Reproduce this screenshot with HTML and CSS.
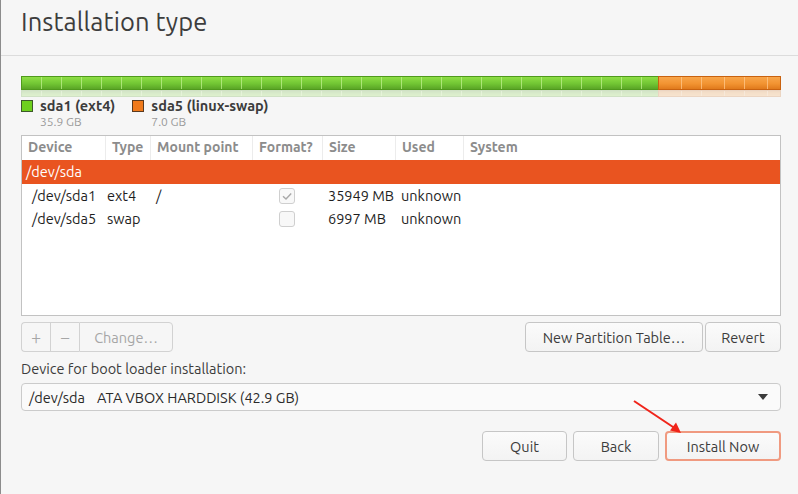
FILE: index.html
```html
<!DOCTYPE html>
<html lang="en">
<head>
<meta charset="utf-8">
<title>Installation type</title>
<link rel="stylesheet" href="styles.css">
</head>
<body>
<div class="window">
  <header class="header">
    <h1 class="title">Installation type</h1>
  </header>
  <main class="content">
    <div class="bar-wrap">
      <div class="bar">
        <div class="seg seg-green" style="width:83.8%"></div>
        <div class="seg seg-orange" style="width:16.2%"></div>
      </div>
      <div class="bar reflect">
        <div class="seg seg-green" style="width:83.8%"></div>
        <div class="seg seg-orange" style="width:16.2%"></div>
      </div>
    </div>

    <div class="legend">
      <div class="legend-item">
        <span class="swatch swatch-green"></span>
        <div class="legend-text">
          <div class="legend-name">sda1 (ext4)</div>
          <div class="legend-size">35.9 GB</div>
        </div>
      </div>
      <div class="legend-item">
        <span class="swatch swatch-orange"></span>
        <div class="legend-text">
          <div class="legend-name">sda5 (linux-swap)</div>
          <div class="legend-size">7.0 GB</div>
        </div>
      </div>
    </div>

    <div class="table">
      <div class="row head">
        <div class="cell">Device</div>
        <div class="cell sep">Type</div>
        <div class="cell sep">Mount point</div>
        <div class="cell sep">Format?</div>
        <div class="cell sep">Size</div>
        <div class="cell sep">Used</div>
        <div class="cell sep">System</div>
      </div>
      <div class="row selected">
        <div class="cell disk">/dev/sda</div>
      </div>
      <div class="row part">
        <div class="cell dev">/dev/sda1</div>
        <div class="cell type">ext4</div>
        <div class="cell">/</div>
        <div class="cell fmt"><span class="check checked"><svg viewBox="0 0 16 16" width="16" height="16"><path d="M4 8.2 L7 11 L12.2 5.4" fill="none" stroke="#a8a8a8" stroke-width="1.4"/></svg></span></div>
        <div class="cell">35949 MB</div>
        <div class="cell">unknown</div>
        <div class="cell"></div>
      </div>
      <div class="row part">
        <div class="cell dev">/dev/sda5</div>
        <div class="cell type">swap</div>
        <div class="cell"></div>
        <div class="cell fmt"><span class="check"></span></div>
        <div class="cell">6997 MB</div>
        <div class="cell">unknown</div>
        <div class="cell"></div>
      </div>
    </div>

    <div class="toolbar">
      <div class="btn-group">
        <button class="btn disabled icon-btn">+</button>
        <button class="btn disabled icon-btn">−</button>
        <button class="btn disabled change-btn">Change…</button>
      </div>
      <div class="right-group">
        <button class="btn npt-btn">New Partition Table…</button>
        <button class="btn revert-btn">Revert</button>
      </div>
    </div>

    <div class="boot-label">Device for boot loader installation:</div>
    <div class="select">
      <span class="select-text"><span class="dev-name">/dev/sda</span>ATA VBOX HARDDISK (42.9 GB)</span>
      <span class="caret"></span>
    </div>

    <div class="actions">
      <button class="btn act-btn quit-btn">Quit</button>
      <button class="btn act-btn back-btn">Back</button>
      <button class="btn act-btn install-btn">Install Now</button>
    </div>
  </main>
  <svg class="arrow" width="798" height="494" viewBox="0 0 798 494">
    <line x1="634" y1="401" x2="676" y2="429" stroke="#f0241a" stroke-width="2"/>
    <path d="M681 433 L670 430.5 L676 422.5 Z" fill="#f0241a"/>
  </svg>
</div>
</body>
</html>
```

FILE: styles.css
```css
* { box-sizing: border-box; }
html, body { margin: 0; padding: 0; }
body {
  background: #f6f6f6;
  font-family: "Ubuntu", "Noto Sans", "Open Sans", sans-serif;
  color: #3c3c3c;
  width: 798px;
  height: 494px;
  overflow: hidden;
}
.window {
  position: relative;
  width: 798px;
  height: 494px;
  border-left: 1px solid #8c8c8c;
}
.header {
  height: 56px;
  border-bottom: 1px solid #dcdcdc;
  padding-left: 20px;
}
.title {
  margin: 0;
  padding-top: 4px;
  font-weight: 400;
  font-size: 25.5px;
  letter-spacing: 0.1px;
  color: #3d3d3d;
  line-height: 36px;
}
.content {
  padding: 20px 17px 0 20px;
}
.bar-wrap { height: 20px; }
.bar {
  display: flex;
  height: 14px;
}
.seg { height: 100%; }
.seg-green {
  border: 1px solid #4f9a1c;
  border-right: none;
  background:
    repeating-linear-gradient(90deg, transparent 0 19px, rgba(190,240,140,0.75) 19px 20px),
    linear-gradient(#8ede45, #72c634 55%, #5aa526);
}
.seg-orange {
  border: 1px solid #c9620f;
  background:
    repeating-linear-gradient(90deg, transparent 0 22px, rgba(255,200,140,0.75) 22px 23px, transparent 23px 42px, rgba(255,200,140,0.75) 42px 43px),
    linear-gradient(#f8a54a, #f29432 55%, #e07a1c);
}
.reflect {
  height: 7px;
  transform: scaleY(-1);
  opacity: 0.22;
}
.legend {
  display: flex;
  gap: 17px;
  margin-top: 0;
}
.legend-item { display: flex; align-items: flex-start; }
.swatch {
  width: 12px;
  height: 12px;
  margin-top: 4px;
  margin-right: 7px;
  border: 1px solid #4a4a4a;
}
.swatch-green { background: #6ed01e; border-color: #3d5a2a; }
.swatch-orange { background: #f07a1c; border-color: #5a3a20; }
.legend-name {
  font-size: 14.5px;
  font-weight: 700;
  color: #3c3c3c;
  line-height: 19px;
}
.legend-size {
  font-size: 12px;
  color: #9a9a9a;
  line-height: 13px;
}
.table {
  margin-top: 7px;
  height: 181px;
  background: #ffffff;
  border: 1px solid #c2c2c2;
}
.row {
  display: grid;
  grid-template-columns: 83px 45px 102px 70px 73px 68px 1fr;
  align-items: center;
}
.row.head {
  height: 24px;
  font-size: 14px;
  font-weight: 700;
  color: #8c8c8c;
}
.head .cell {
  padding-left: 6px;
  height: 24px;
  line-height: 23px;
  white-space: nowrap;
  overflow: hidden;
}
.head .cell.sep { border-left: 1px solid #ececec; }
.row.selected {
  display: block;
  height: 24px;
  background: #e95420;
}
.cell.disk {
  color: #ffffff;
  font-size: 14.5px;
  line-height: 24px;
  padding-left: 4px;
}
.row.part {
  height: 23px;
  font-size: 14.5px;
  color: #1e1e1e;
}
.part .cell {
  padding-left: 6px;
  white-space: nowrap;
}
.part .cell.dev { padding-left: 10px; }
.part .cell.type { padding-left: 2px; }
.part .cell.fmt {
  padding-left: 0;
  display: flex;
  justify-content: center;
}
.check {
  display: block;
  width: 16px;
  height: 16px;
  border: 1px solid #cfcfcf;
  border-radius: 3px;
  background: #f8f8f8;
}
.check svg { display: block; margin: -1px 0 0 -1px; }
.toolbar {
  display: flex;
  justify-content: space-between;
  margin-top: 6px;
}
.btn {
  font-family: inherit;
  font-size: 14.5px;
  color: #3c3c3c;
  background: linear-gradient(#fbfbfb, #f3f3f3);
  border: 1px solid #c6c6c6;
  border-radius: 4px;
  height: 30px;
  padding: 0;
  cursor: default;
}
.btn-group { display: flex; }
.btn.disabled {
  color: #a6a6a6;
  border-color: #d2d2d2;
  background: #f6f6f6;
}
.icon-btn {
  width: 29px;
  font-size: 18px;
  font-weight: 300;
  border-radius: 0;
  border-right: none;
  color: #b0b0b0;
}
.icon-btn:first-child { border-radius: 4px 0 0 4px; }
.change-btn {
  width: 94px;
  border-radius: 0 4px 4px 0;
}
.right-group { display: flex; gap: 2px; }
.npt-btn { width: 178px; }
.revert-btn { width: 76px; }
.boot-label {
  font-size: 14.5px;
  color: #3c3c3c;
  margin-top: 7px;
  line-height: 20px;
}
.select {
  margin-top: 4px;
  height: 28px;
  background: #fafafa;
  border: 1px solid #cbcbcb;
  border-radius: 4px;
  display: flex;
  align-items: center;
  justify-content: space-between;
  padding: 0 12px 0 7px;
  font-size: 14.5px;
  color: #2a2a2a;
}
.dev-name { margin-right: 12px; }
.caret {
  width: 0;
  height: 0;
  border-left: 5px solid transparent;
  border-right: 5px solid transparent;
  border-top: 6px solid #3a3a3a;
}
.actions {
  display: flex;
  justify-content: flex-end;
  gap: 6px;
  margin-top: 20px;
}
.act-btn { height: 30px; }
.quit-btn { width: 85px; }
.back-btn { width: 86px; }
.install-btn {
  width: 116px;
  border: 2px solid #f09a80;
}
.arrow {
  position: absolute;
  left: -1px;
  top: 0;
  pointer-events: none;
}
```
